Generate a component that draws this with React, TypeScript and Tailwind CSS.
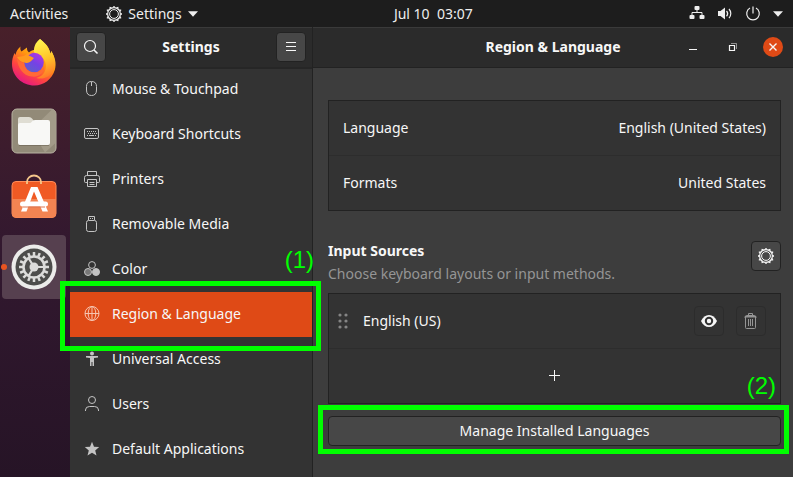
import type { ReactNode } from "react";

type IconProps = { className?: string };

const teeth = (count: number) => Array.from({ length: count }, (_, i) => (i * 360) / count);

function SunGear({ className = "size-4" }: IconProps) {
  return (
    <svg viewBox="0 0 16 16" className={className} fill="none" stroke="currentColor" aria-hidden="true">
      <circle cx="8" cy="8" r="6.4" strokeWidth="1.2" />
      <circle cx="8" cy="8" r="4.4" strokeWidth="1" />
      {teeth(12).map((a) => (
        <path key={a} d="M7 1.2 8 .2 9 1.2" strokeWidth="1" transform={`rotate(${a} 8 8)`} />
      ))}
    </svg>
  );
}

function Caret() {
  return (
    <svg viewBox="0 0 10 6" className="h-[6px] w-[10px]" fill="currentColor" aria-hidden="true">
      <path d="M0 .3h10L5 5.7z" />
    </svg>
  );
}

function NetworkIcon() {
  return (
    <svg viewBox="0 0 16 16" className="size-4" fill="currentColor" aria-hidden="true">
      <rect x="5.5" y="0" width="5" height="4" rx="1" />
      <rect x=".5" y="9" width="5" height="4" rx="1" />
      <rect x="10.5" y="9" width="5" height="4" rx="1" />
      <path d="M8 3v4M3 10V6.500h10V10" fill="none" stroke="currentColor" />
    </svg>
  );
}

function VolumeIcon() {
  return (
    <svg viewBox="0 0 16 16" className="size-4" fill="none" stroke="currentColor" aria-hidden="true">
      <path d="M1 5h2.500L8 1.500v12L3.500 10H1z" fill="currentColor" stroke="none" />
      <path d="M12 3a6.800 6.800 0 0 1 0 9.200" strokeWidth="1.200" />
      <path d="M9.500 5a3.600 3.600 0 0 1 0 5.200" strokeWidth="1.400" />
    </svg>
  );
}

function PowerIcon() {
  return (
    <svg viewBox="0 0 16 16" className="size-4" fill="none" stroke="currentColor" strokeWidth="1.2" aria-hidden="true">
      <path d="M8 .500v7M5 2a6.300 6.300 0 1 0 6 0" />
    </svg>
  );
}

function FirefoxIcon() {
  return (
    <svg viewBox="0 0 46 48" className="h-12 w-[46px]" aria-hidden="true">
      <defs>
        <linearGradient id="fx-body" x1=".8" y1=".1" x2=".3" y2="1">
          <stop offset="0" stopColor="#ffe53b" />
          <stop offset=".4" stopColor="#ff980e" />
          <stop offset=".7" stopColor="#ff4540" />
          <stop offset="1" stopColor="#e31587" />
        </linearGradient>
        <linearGradient id="fx-tail" x1=".4" y1="0" x2=".6" y2="1">
          <stop offset="0" stopColor="#fff44f" />
          <stop offset=".5" stopColor="#ffc629" />
          <stop offset="1" stopColor="#ff7528" />
        </linearGradient>
        <linearGradient id="fx-globe" x1=".8" y1="0" x2=".2" y2="1">
          <stop offset="0" stopColor="#b833e1" />
          <stop offset=".5" stopColor="#7542e5" />
          <stop offset="1" stopColor="#5b62c8" />
        </linearGradient>
      </defs>
      <path d="M9.500 8.500c-.5 2 0 4 1 5l5.500-4c-.2 2 .5 4 2 5 2-2 4-2.500 6-2.500L29 1c3 3 9 6 10.500 15l.8-3c3.500 6 5.500 12 3.500 19C41 41 33 47.500 23.500 47.500 11 47.500 1 38 1 26c0-4 .9-7.500 2.500-11l1 2C5 14 6.500 11 9.500 8.500z" fill="url(#fx-body)" />
      <path d="M29 1c5 4 9.500 9 10.500 15l.8-3c3.800 7 4.700 13 2 19-3 7-10 10-17 8 8-2 11-9 9-16-2-5-7-6-11-9-1-5 .5-10 5.700-14z" fill="url(#fx-tail)" />
      <circle cx="23" cy="24.500" r="9.800" fill="url(#fx-globe)" />
      <path d="M23 14c-5 0-7 2-10 4l-7 1c2 4 5 5 9 6 2 .2 5-1 8-5-2-1-4-2-5.500-2.500C19 16 21 15 23 14z" fill="#ff9a1f" />
      <path d="M6 19c1 5 4 5 7 6 1 6 5 9.500 11 9.500 5 0 8-3 9-7 1 7-5 12-12 11C12 38 6 29 6 19z" fill="#ff6a36" />
    </svg>
  );
}

function FilesIcon() {
  return (
    <svg viewBox="0 -1 46 46" className="size-[46px] overflow-visible" aria-hidden="true">
      <rect x="1" y="1" width="44" height="44" rx="5" fill="#928a78" stroke="#b8b2a2" />
      <path d="M20 22 41 1.500a4 4 0 0 1 3.500 3.500v30L34 44.500z" fill="#a39b89" />
      <path d="M7 11q0-2 2-2h9q2 0 3 1.500l2 2.500v8H7z" fill="#dfddd3" />
      <path d="M7 17q0-2 2-2h9.500q1.500 0 2.500-1.500l1-1q.8-.5 2-.5H37q2 0 2 2v21q0 2-2 2H9q-2 0-2-2z" fill="#f8f8f6" />
      <path d="M8 37.500h30" stroke="#645c4d" opacity=".5" />
    </svg>
  );
}

function SoftwareIcon() {
  return (
    <svg viewBox="0 2 46 46" className="size-[46px] overflow-visible" aria-hidden="true">
      <rect x="1" y="8.500" width="44" height="36" rx="4" fill="#f05a24" stroke="#ff8b57" />
      <path d="M1 26h44v14.500q0 4-4 4H5q-4 0-4-4z" fill="#f38452" />
      <path d="M16 11v-2a7 6.500 0 0 1 14 0v2" fill="none" stroke="#f5c78b" strokeWidth="1.800" />
      <path d="M20 14h6.500L37 38.500h-5.500L23 18.500 15.500 38.500H10z" fill="#fff" />
      <rect x="9" y="28.500" width="28" height="5" rx="2.500" fill="#fff" />
      <path d="M12 34h22" stroke="#db7650" />
    </svg>
  );
}

function SettingsAppIcon() {
  return (
    <svg viewBox="0 0 46 46" className="size-[46px]" aria-hidden="true">
      <circle cx="23" cy="23" r="22.500" fill="#ececea" />
      <circle cx="23" cy="23" r="18.500" fill="#4d4d4b" />
      <g stroke="#dcdcda" fill="none">
        {teeth(16).map((a) => (
          <path key={a} d="M23 8v4" strokeWidth="2.500" transform={`rotate(${a} 23 23)`} />
        ))}
        <circle cx="23" cy="23" r="10.500" strokeWidth="2.500" />
        <path d="M23 23h10M23 23l-5.500-9M23 23l-5.500 9" strokeWidth="2.200" />
      </g>
      <circle cx="23" cy="23" r="4.500" fill="#dcdcda" />
    </svg>
  );
}

function LineIcon({ children, className = "size-4" }: { children: ReactNode; className?: string }) {
  return (
    <svg viewBox="0 0 16 16" className={className} fill="none" stroke="currentColor" aria-hidden="true">
      {children}
    </svg>
  );
}

const panels: { label: string; icon: ReactNode }[] = [
  {
    label: "Mouse & Touchpad",
    icon: (
      <LineIcon>
        <path d="M2.500 5.500q0-5 5-5t5 5V9q0 5.500-5 5.500T2.500 9zM7.500 1v4" />
      </LineIcon>
    ),
  },
  {
    label: "Keyboard Shortcuts",
    icon: (
      <LineIcon>
        <rect x=".5" y="2.500" width="14" height="10" rx="1.500" />
        <path d="M3 5.500h10M4 7.500h9" strokeDasharray="1 1" />
        <path d="M3 9.500h1M5 9.500h5M11 9.500h1" />
      </LineIcon>
    ),
  },
  {
    label: "Printers",
    icon: (
      <LineIcon>
        <path d="M3.500 4.500v-4h9v4M3 11.500H1.500q-1 0-1-1v-4q0-2 2-2h11q2 0 2 2v4q0 1-1 1H13" />
        <path d="M3.500 8.500h9v7h-9zM5.500 11.500h5M5.500 13.500h5" />
      </LineIcon>
    ),
  },
  {
    label: "Removable Media",
    icon: (
      <LineIcon>
        <path d="M4.500 4V.5h6V4M6.500 2v1M8.500 2v1" />
        <rect x="2.500" y="4.500" width="10" height="11" rx="2" />
      </LineIcon>
    ),
  },
  {
    label: "Color",
    icon: (
      <LineIcon>
        <circle cx="8" cy="4" r="3.400" />
        <circle cx="4" cy="11" r="3.500" fill="#777" />
        <circle cx="12" cy="11" r="3.500" fill="currentColor" />
      </LineIcon>
    ),
  },
  {
    label: "Region & Language",
    icon: (
      <LineIcon>
        <circle cx="8" cy="7.500" r="7" />
        <ellipse cx="8" cy="7.500" rx="3.800" ry="7" />
        <path d="M8 .500v14M1 7.500h14" />
      </LineIcon>
    ),
  },
  {
    label: "Universal Access",
    icon: (
      <LineIcon>
        <circle cx="8" cy="2.500" r="2" fill="currentColor" stroke="none" />
        <path d="M2 5h12v1.500l-4 .5v8H8.500v-4h-1v4H6V7l-4-.5z" fill="currentColor" stroke="none" />
      </LineIcon>
    ),
  },
  {
    label: "Users",
    icon: (
      <LineIcon>
        <circle cx="8" cy="4" r="3.500" />
        <path d="M1.500 15v-1q0-3.500 4-3.500h5q4 0 4 3.500v1" />
      </LineIcon>
    ),
  },
  {
    label: "Default Applications",
    icon: (
      <LineIcon>
        <path d="m8 .800 2 4.900 5.200.400-4 3.400 1.300 5.100L8 11.800l-4.500 2.800 1.300-5.100-4-3.400L6 5.700z" fill="currentColor" stroke="none" />
      </LineIcon>
    ),
  },
];

const apps = [
  { name: "Firefox", icon: <FirefoxIcon /> },
  { name: "Files", icon: <FilesIcon /> },
  { name: "Software", icon: <SoftwareIcon /> },
];

function TopBar() {
  return (
    <header className="flex h-[27px] items-center bg-[#1d1d1d] px-[10px] text-[#eeeeee]">
      <button type="button">Activities</button>
      <button type="button" className="ml-[38px] flex items-center gap-[6px]">
        <SunGear />
        Settings
        <Caret />
      </button>
      <time className="flex-1 whitespace-pre pr-5 text-center">Jul 10  03:07</time>
      <button type="button" aria-label="System menu" className="flex items-center gap-3">
        <NetworkIcon />
        <VolumeIcon />
        <PowerIcon />
        <Caret />
      </button>
    </header>
  );
}

function Dock() {
  return (
    <nav aria-label="Dock" className="flex w-[70px] shrink-0 flex-col bg-linear-to-b from-[#48202a] via-[#32182f] to-[#261426]">
      {apps.map((app) => (
        <button key={app.name} type="button" aria-label={app.name} className="flex h-[68px] items-center justify-center pr-[2px] pt-[2px]">
          {app.icon}
        </button>
      ))}
      <button type="button" aria-label="Settings" className="mx-[2px] mt-[4px] flex h-16 w-16 items-center gap-[7px] rounded bg-[#56404f]">
        <span className="-ml-[1px] size-[6px] shrink-0 rounded-full bg-[#e95420]" />
        <span className="-ml-[3px] shrink-0">
          <SettingsAppIcon />
        </span>
      </button>
    </nav>
  );
}

const raised = "border border-[#222222] bg-[#474747]";

function Sidebar() {
  return (
    <aside className="flex w-[243px] shrink-0 flex-col border-r border-[#222222] bg-[#333333]">
      <div className="flex h-10 items-center justify-between border-t border-[#3a3a3a] bg-[#2b2b2b] px-[6px] pb-[1px]">
        <button type="button" aria-label="Search" className={`flex size-[30px] items-center justify-center rounded ${raised}`}>
          <LineIcon>
            <circle cx="7" cy="7" r="5.500" strokeWidth="1.200" />
            <path d="m11 11 3.500 3.500" strokeWidth="1.600" />
          </LineIcon>
        </button>
        <h1 className="font-bold">Settings</h1>
        <button type="button" aria-label="Menu" className={`flex size-[30px] items-center justify-center rounded ${raised}`}>
          <LineIcon>
            <path d="M3 3.500h10M3 7.500h10M3 11.500h10" />
          </LineIcon>
        </button>
      </div>
      <ul className="shadow-[inset_0_2px_0_#262626]">
        {panels.map((panel) => {
          const active = panel.label === "Region & Language";
          return (
            <li key={panel.label} className="relative">
              <a
                href="#"
                aria-current={active ? "page" : undefined}
                className={`flex h-[45px] items-center gap-3 px-[14px] pb-[1px] ${active ? "bg-[#df4a16]" : ""}`}
              >
                <span className={active ? "text-[#f6c4b0]" : "text-[#c4c4c4]"}>{panel.icon}</span>
                {panel.label}
              </a>
              {active && (
                <>
                  <span className="pointer-events-none absolute -bottom-[14px] -left-[10px] -right-[9px] -top-[11px] z-10 border-5 border-[#00ff00]" />
                  <Step className="-right-[2px] -top-11">(1)</Step>
                </>
              )}
            </li>
          );
        })}
      </ul>
    </aside>
  );
}

function Step({ children, className }: { children: ReactNode; className: string }) {
  return (
    <span className={`pointer-events-none absolute z-10 font-['Liberation_Sans',Arial,sans-serif] text-2xl leading-6 text-[#00ff00] ${className}`}>
      {children}
    </span>
  );
}

function WindowHeader() {
  return (
    <div className="grid h-10 grid-cols-[1fr_auto_1fr] items-center border-t border-[#3a3a3a] bg-[#2b2b2b] pb-[1px]">
      <span />
      <h2 className="font-bold">Region &amp; Language</h2>
      <div className="flex items-center justify-end gap-6 pr-[10px]">
        <button type="button" aria-label="Minimize">
          <LineIcon>
            <path d="M5 10.500h8" />
          </LineIcon>
        </button>
        <button type="button" aria-label="Restore">
          <LineIcon>
            <path d="M5.500 6.500h5v5h-5z" strokeWidth="1.200" />
            <path d="M7 4.500h5.500V10" opacity=".5" />
          </LineIcon>
        </button>
        <button type="button" aria-label="Close" className="-ml-[1px] flex size-5 items-center justify-center rounded-full bg-[#df4a16]">
          <LineIcon>
            <path d="m4.500 4.500 7 7m0-7-7 7" strokeWidth="1.400" />
          </LineIcon>
        </button>
      </div>
    </div>
  );
}

const card = "divide-y divide-[#2d2d2d] border border-[#222222] bg-[#333333]";

function Content() {
  return (
    <main className="flex min-w-0 flex-1 flex-col bg-[#3d3d3d]">
      <WindowHeader />
      <div className="flex flex-col border-t border-[#222222] pl-[15px] pr-3 pt-8">
        <div className={card}>
          <button type="button" className="flex h-[55px] w-full items-center justify-between px-[14px]">
            <span>Language</span>
            <span>English (United States)</span>
          </button>
          <button type="button" className="flex h-[54px] w-full items-center justify-between px-[14px]">
            <span>Formats</span>
            <span>United States</span>
          </button>
        </div>

        <div className="mt-7 flex items-start justify-between">
          <div className="leading-[23px]">
            <h3 className="font-bold">Input Sources</h3>
            <p className="text-[#959595]">Choose keyboard layouts or input methods.</p>
          </div>
          <button type="button" aria-label="Input source options" className={`mt-[2px] flex size-[30px] items-center justify-center rounded ${raised}`}>
            <SunGear />
          </button>
        </div>

        <div className={`mt-2 ${card}`}>
          <div className="flex h-[55px] items-center gap-3 px-[14px]">
            <svg viewBox="0 0 10 16" className="-ml-[5px] mr-[3px] h-4 w-[10px]" fill="#858585" aria-hidden="true">
              {[2, 8, 14].map((y) => (
                <g key={y}>
                  <circle cx="2" cy={y} r="1.600" />
                  <circle cx="8" cy={y} r="1.600" />
                </g>
              ))}
            </svg>
            <span className="flex-1">English (US)</span>
            <button type="button" aria-label="View layout" className="flex size-[30px] items-center justify-center rounded border border-[#2c2c2c]">
              <LineIcon>
                <path d="M0 8C2 4 4.500 2 8 2s6 2 8 6c-2 4-4.500 6-8 6s-6-2-8-6z" fill="currentColor" stroke="none" />
                <circle cx="8" cy="8" r="3.200" stroke="#333333" strokeWidth="2" />
              </LineIcon>
            </button>
            <button type="button" aria-label="Remove layout" className="flex size-[30px] items-center justify-center rounded border border-[#2c2c2c] text-[#959595]">
              <LineIcon>
                <path d="M5.500 2V.5h4V2" />
                <path d="M1 4.500Q2 2 4 2h7q2 0 3 2.500z" fill="currentColor" stroke="none" />
                <path d="M2.500 4v10.500q0 1 1 1h8q1 0 1-1V4M5.500 6v7M7.500 6v7M9.500 6v7" />
              </LineIcon>
            </button>
          </div>
          <button type="button" aria-label="Add input source" className="flex h-[54px] w-full items-center justify-center">
            <LineIcon>
              <path d="M7.500 2v11M2 7.500h11" />
            </LineIcon>
          </button>
        </div>

        <div className="relative mt-3">
          <button type="button" className={`h-[30px] w-full rounded ${raised}`}>
            Manage Installed Languages
          </button>
          <span className="pointer-events-none absolute -bottom-2 -left-[10px] -right-2 -top-[11px] z-10 border-5 border-[#00ff00]" />
          <Step className="-top-[42px] right-[5px]">(2)</Step>
        </div>
      </div>
    </main>
  );
}

export default function App() {
  return (
    <div className="flex min-h-screen flex-col bg-[#3d3d3d] font-['Noto_Sans','Open_Sans',sans-serif] text-sm text-[#f7f7f7]">
      <TopBar />
      <div className="flex flex-1">
        <Dock />
        <Sidebar />
        <Content />
      </div>
    </div>
  );
}
